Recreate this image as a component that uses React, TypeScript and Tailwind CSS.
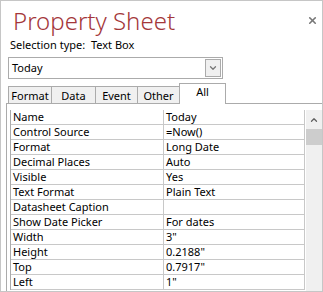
import { ChevronDown, ChevronUp, X } from "lucide-react";

const rows: [string, string][] = [
  ["Name", "Today"],
  ["Control Source", "=Now()"],
  ["Format", "Long Date"],
  ["Decimal Places", "Auto"],
  ["Visible", "Yes"],
  ["Text Format", "Plain Text"],
  ["Datasheet Caption", ""],
  ["Show Date Picker", "For dates"],
  ["Width", '3"'],
  ["Height", '0.2188"'],
  ["Top", '0.7917"'],
  ["Left", '1"'],
];

const tabs: [string, string][] = [
  ["Format", "w-[44px]"],
  ["Data", "w-[45px]"],
  ["Event", "w-[43px]"],
  ["Other", "w-[43px]"],
];

export default function App() {
  return (
    <div
      className="relative h-[292px] w-[323px] overflow-hidden border border-[#c6c6c6] bg-white text-[11px] text-black"
      style={{ fontFamily: '"Segoe UI", "Noto Sans", sans-serif' }}
    >
      <button className="absolute right-[4px] top-[14px] text-[#777]">
        <X className="h-[11px] w-[11px]" strokeWidth={3.5} />
      </button>

      <h1 className="ml-[12px] mt-[5px] h-[30px] text-[24px] font-light leading-[30px] text-[#a4373a]">
        Property Sheet
      </h1>
      <p className="ml-[9px] mt-[1px] h-[16px] leading-[16px]">Selection type:&nbsp; Text Box</p>

      <div className="ml-[7px] mt-[4px] flex h-[22px] w-[215px] items-center border border-[#ababab] pl-[3px] pr-[1px]">
        <span className="flex-1">Today</span>
        <span className="grid h-[18px] w-[16px] place-items-center border border-[#ababab] bg-[#f0f0f0] text-[#777]">
          <ChevronDown className="h-[10px] w-[10px]" strokeWidth={3} />
        </span>
      </div>

      <div className="ml-[7px] mt-[4px] flex h-[20px] items-end">
        {tabs.map(([t, w]) => (
          <div
            key={t}
            className={`-mr-px flex h-[17px] items-center justify-center border border-b-0 border-[#ababab] bg-[#f0f0f0] leading-none ${w}`}
          >
            {t}
          </div>
        ))}
        <div className="relative z-10 -mb-px flex h-[21px] w-[47px] items-start justify-center border border-b-0 border-[#ababab] bg-white pt-[1px] leading-[14px]">
          All
        </div>
      </div>

      <div className="ml-[5px] flex h-[200px] border-l border-t border-[#ababab] pl-[3px] pt-[6px]">
        <div className="w-[295px]">
          <div className="border-l border-[#ababab]">
            {rows.map(([k, v]) => (
              <div key={k} className="flex h-[15px] border-b border-[#c8c8c8] leading-[14px]">
                <span className="w-[153px] border-r border-[#c8c8c8] pl-[2px]">{k}</span>
                <span className="flex-1 border-r border-[#c8c8c8] pl-[2px]">{v}</span>
              </div>
            ))}
          </div>
        </div>
        <div className="ml-[1px] flex h-full w-[16px] flex-col items-center bg-[#f0f0f0] text-[#606060]">
          <ChevronUp className="mt-[5px] h-[10px] w-[10px]" strokeWidth={3} />
          <div className="mt-[4px] h-[16px] w-[16px] bg-[#cdcdcd]" />
        </div>
      </div>
    </div>
  );
}
